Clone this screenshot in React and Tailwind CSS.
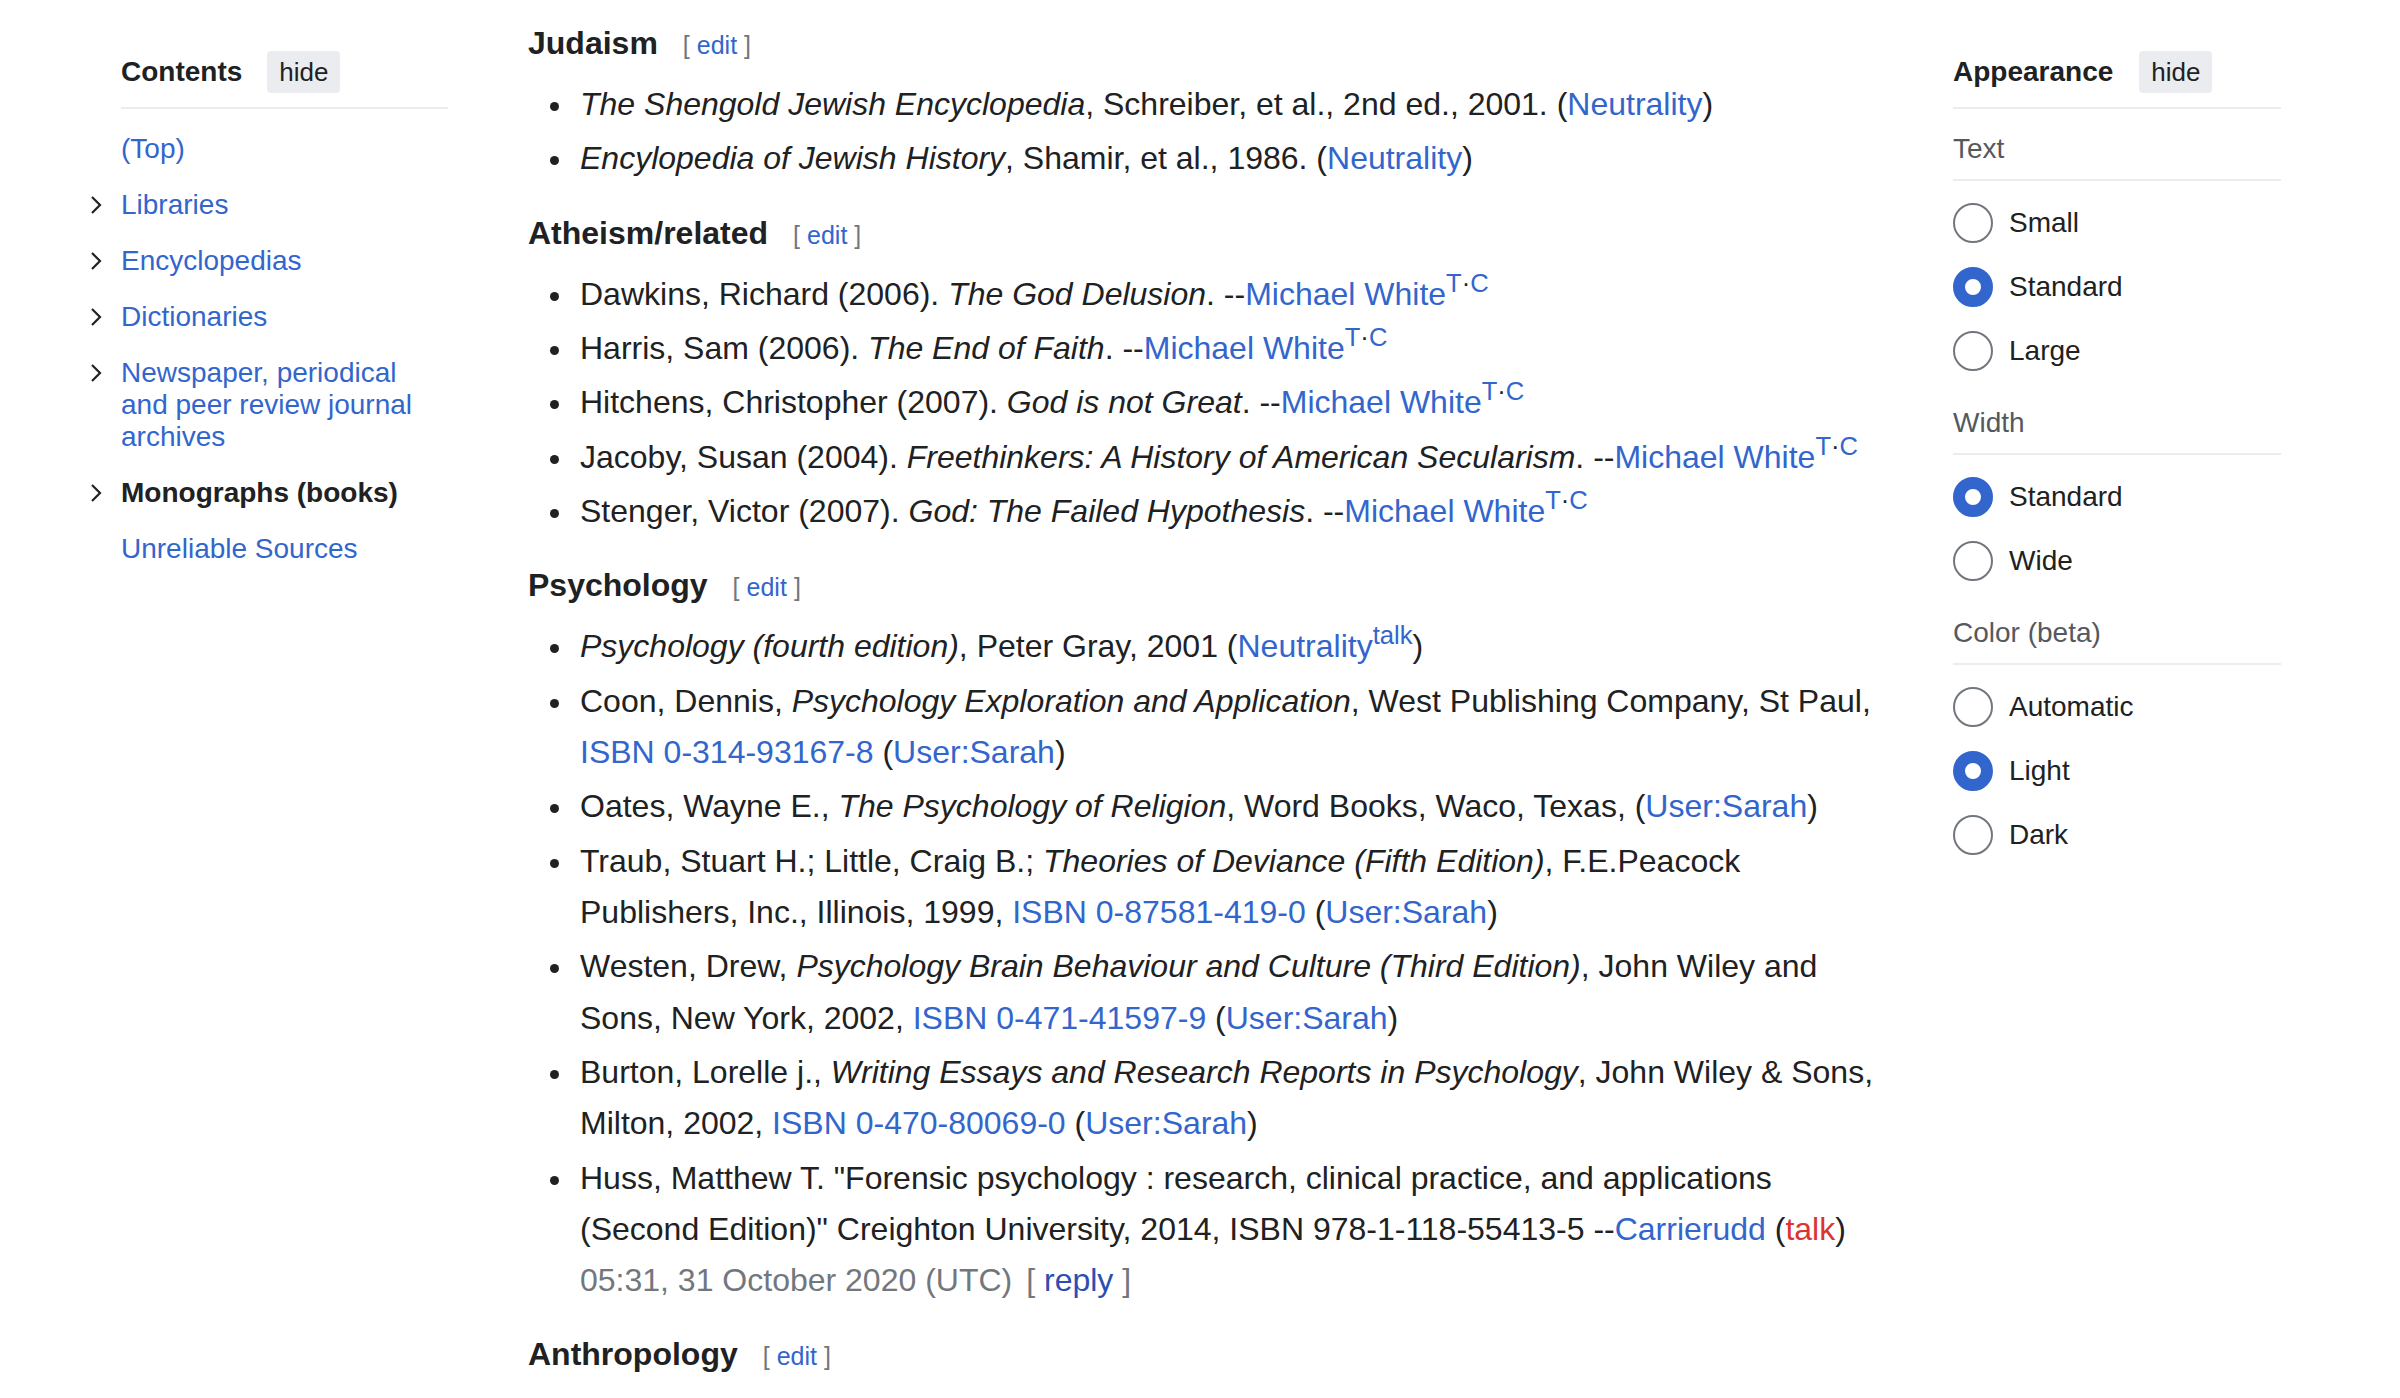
import React from "react";

const A = ({ children, className = "" }) => (
  <a href="#" className={"text-[#3366cc] " + className}>
    {children}
  </a>
);

const TC = () => (
  <sup className="text-[0.8em] leading-none align-baseline relative top-[-13px]">
    <A>T</A>
    <span className="text-[#202122]">·</span>
    <A>C</A>
  </sup>
);

function Chevron() {
  return (
    <svg viewBox="0 0 14 20" className="w-[14px] h-[20px]" fill="none">
      <path d="M3 2 L11 10 L3 18" stroke="#202122" strokeWidth="2.2" />
    </svg>
  );
}

function Heading({ children, first }) {
  return (
    <h3
      className={
        "flex items-baseline text-[32px] leading-[40px] font-bold text-[#202122] mb-[14px] " +
        (first ? "mt-0" : "mt-[28px]")
      }
    >
      {children}
      <span className="ml-[25px] text-[25px] font-normal text-[#72777d]">
        [<a href="#" className="mx-[7px] text-[#3366cc]">edit</a>]
      </span>
    </h3>
  );
}

function Item({ children }) {
  return (
    <li className="flex mb-[3.2px]">
      <div className="w-[52px] shrink-0 h-[51px] flex items-center pl-[22px] pt-[4px]">
        <span className="w-[9px] h-[9px] rounded-full bg-[#202122]" />
      </div>
      <div className="whitespace-nowrap">{children}</div>
    </li>
  );
}

function TocItem({ chevron, bold, children }) {
  return (
    <li className="flex py-[12px]">
      <div className="w-[26px] shrink-0 h-[32px] flex items-center -ml-[6px] mr-[6px]">
        {chevron && <Chevron />}
      </div>
      <a
        href="#"
        className={
          "text-[28px] leading-[32px] " +
          (bold ? "font-bold text-[#202122]" : "text-[#3366cc]")
        }
      >
        {children}
      </a>
    </li>
  );
}

function Radio({ checked, label }) {
  return (
    <div className="flex items-center h-[64px]">
      <span
        className={
          "w-[40px] h-[40px] rounded-full shrink-0 " +
          (checked
            ? "border-[12px] border-[#3366cc] bg-white"
            : "border-2 border-[#72777d] bg-white")
        }
      />
      <span className="ml-[16px] text-[28px] text-[#202122]">{label}</span>
    </div>
  );
}

function Group({ title, options }) {
  return (
    <div>
      <div className="pt-[22px] pb-[12px] text-[28px] leading-[36px] text-[#54595d] border-b-2 border-[#eaecf0]">
        {title}
      </div>
      <div className="mt-[10px]">
        {options.map((o) => (
          <Radio key={o.label} {...o} />
        ))}
      </div>
    </div>
  );
}

export default function App() {
  return (
    <div
      className="flex w-full min-h-[1398px] bg-white text-[#202122]"
      style={{ fontFamily: '"Liberation Sans", Arial, Helvetica, sans-serif' }}
    >
      {/* Contents */}
      <aside className="w-[448px] shrink-0 pl-[95px] pt-[51px]">
        <div className="flex items-center gap-[25px] ml-[26px] pb-[14px] border-b-2 border-[#eaecf0]">
          <span className="text-[28px] font-bold">Contents</span>
          <button className="h-[42px] px-[12px] rounded-[4px] bg-[#eaecf0] text-[26px] text-[#202122]">
            hide
          </button>
        </div>
        <ul className="mt-[12px]">
          <TocItem>(Top)</TocItem>
          <TocItem chevron>Libraries</TocItem>
          <TocItem chevron>Encyclopedias</TocItem>
          <TocItem chevron>Dictionaries</TocItem>
          <TocItem chevron>
            Newspaper, periodical
            <br />
            and peer review journal
            <br />
            archives
          </TocItem>
          <TocItem chevron bold>
            Monographs (books)
          </TocItem>
          <TocItem>Unreliable Sources</TocItem>
        </ul>
      </aside>

      {/* Article */}
      <main className="w-[1352px] shrink-0 ml-[80px] pt-[23px] text-[32px] leading-[51.2px]">
        <Heading first>Judaism</Heading>
        <ul>
          <Item>
            <i>The Shengold Jewish Encyclopedia</i>, Schreiber, et al., 2nd ed., 2001. (<A>Neutrality</A>)
          </Item>
          <Item>
            <i>Encylopedia of Jewish History</i>, Shamir, et al., 1986. (<A>Neutrality</A>)
          </Item>
        </ul>

        <Heading>Atheism/related</Heading>
        <ul>
          <Item>
            Dawkins, Richard (2006). <i>The God Delusion</i>. --<A>Michael White</A>
            <TC />
          </Item>
          <Item>
            Harris, Sam (2006). <i>The End of Faith</i>. --<A>Michael White</A>
            <TC />
          </Item>
          <Item>
            Hitchens, Christopher (2007). <i>God is not Great</i>. --<A>Michael White</A>
            <TC />
          </Item>
          <Item>
            Jacoby, Susan (2004). <i>Freethinkers: A History of American Secularism</i>. --
            <A>Michael White</A>
            <TC />
          </Item>
          <Item>
            Stenger, Victor (2007). <i>God: The Failed Hypothesis</i>. --<A>Michael White</A>
            <TC />
          </Item>
        </ul>

        <Heading>Psychology</Heading>
        <ul>
          <Item>
            <i>Psychology (fourth edition)</i>, Peter Gray, 2001 (<A>Neutrality</A>
            <sup className="text-[0.8em] leading-none align-baseline relative top-[-13px]">
              <A>talk</A>
            </sup>
            )
          </Item>
          <Item>
            Coon, Dennis, <i>Psychology Exploration and Application</i>, West Publishing Company, St Paul,
            <br />
            <A>ISBN 0-314-93167-8</A> (<A>User:Sarah</A>)
          </Item>
          <Item>
            Oates, Wayne E., <i>The Psychology of Religion</i>, Word Books, Waco, Texas, (<A>User:Sarah</A>)
          </Item>
          <Item>
            Traub, Stuart H.; Little, Craig B.; <i>Theories of Deviance (Fifth Edition)</i>, F.E.Peacock
            <br />
            Publishers, Inc., Illinois, 1999, <A>ISBN 0-87581-419-0</A> (<A>User:Sarah</A>)
          </Item>
          <Item>
            Westen, Drew, <i>Psychology Brain Behaviour and Culture (Third Edition)</i>, John Wiley and
            <br />
            Sons, New York, 2002, <A>ISBN 0-471-41597-9</A> (<A>User:Sarah</A>)
          </Item>
          <Item>
            Burton, Lorelle j., <i>Writing Essays and Research Reports in Psychology</i>, John Wiley &amp; Sons,
            <br />
            Milton, 2002, <A>ISBN 0-470-80069-0</A> (<A>User:Sarah</A>)
          </Item>
          <Item>
            Huss, Matthew T. "Forensic psychology : research, clinical practice, and applications
            <br />
            (Second Edition)" Creighton University, 2014, ISBN 978-1-118-55413-5 --<A>Carrierudd</A> (
            <a href="#" className="text-[#d33]">
              talk
            </a>
            )
            <br />
            <span className="text-[#72777d]">05:31, 31 October 2020 (UTC)</span>
            <span className="ml-[14px] text-[#72777d]">
              [ <a href="#" className="text-[#2a4fb0]">reply</a> ]
            </span>
          </Item>
        </ul>

        <Heading>Anthropology</Heading>
      </main>

      {/* Appearance */}
      <aside className="w-[328px] shrink-0 ml-[73px] pt-[51px]">
        <div className="flex items-center gap-[26px] pb-[14px] border-b-2 border-[#eaecf0]">
          <span className="text-[28px] font-bold">Appearance</span>
          <button className="h-[42px] px-[12px] rounded-[4px] bg-[#eaecf0] text-[26px] text-[#202122]">
            hide
          </button>
        </div>
        <Group
          title="Text"
          options={[
            { label: "Small" },
            { label: "Standard", checked: true },
            { label: "Large" },
          ]}
        />
        <Group
          title="Width"
          options={[{ label: "Standard", checked: true }, { label: "Wide" }]}
        />
        <Group
          title="Color (beta)"
          options={[
            { label: "Automatic" },
            { label: "Light", checked: true },
            { label: "Dark" },
          ]}
        />
      </aside>
    </div>
  );
}
